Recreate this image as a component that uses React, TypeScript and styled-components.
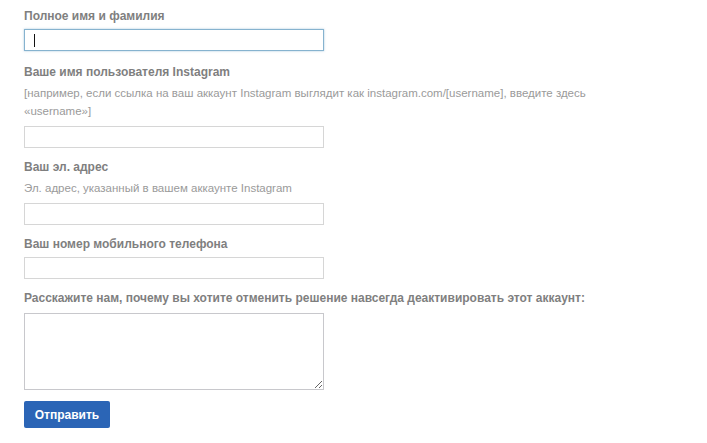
import React from "react";
import styled, { createGlobalStyle } from "styled-components";

const Global = createGlobalStyle`
  html, body { margin: 0; padding: 0; background: #ffffff; }
  body { font-family: "Liberation Sans", Arial, sans-serif; }
`;

const Form = styled.form`
  display: flex;
  flex-direction: column;
  align-items: flex-start;
  padding: 7px 24px 0 24px;
`;

const Field = styled.div<{ $gap?: number }>`
  display: flex;
  flex-direction: column;
  align-items: flex-start;
  margin-bottom: ${(p) => p.$gap ?? 10}px;
`;

const Label = styled.label`
  font-size: 12px;
  font-weight: bold;
  line-height: 18px;
  color: #7f7f7f;
  margin-bottom: 4px;
`;

const Hint = styled.div`
  font-size: 11.5px;
  line-height: 18px;
  color: #9a9a9a;
  margin-top: -1px;
  margin-bottom: 6px;
  max-width: 585px;
`;

const InputWrap = styled.div`
  position: relative;
`;

const TextInput = styled.input<{ $focused?: boolean }>`
  box-sizing: border-box;
  width: 300px;
  height: 22px;
  margin: 0;
  padding: 2px 8px;
  font-family: "Liberation Sans", Arial, sans-serif;
  font-size: 12px;
  background: #fff;
  outline: none;
  border: 1px solid ${(p) => (p.$focused ? "#86b3cf" : "#d6d6d6")};
  box-shadow: ${(p) => (p.$focused ? "0 0 2px rgba(110,160,200,0.6)" : "none")};
`;

const Caret = styled.span`
  position: absolute;
  left: 10px;
  top: 5px;
  width: 1px;
  height: 13px;
  background: #111;
`;

const TextArea = styled.textarea`
  box-sizing: border-box;
  width: 300px;
  height: 77px;
  margin: 2px 0 0 0;
  padding: 4px;
  border: 1px solid #c8c8cc;
  font-family: "Liberation Sans", Arial, sans-serif;
  font-size: 12px;
  outline: none;
  resize: both;
`;

const Submit = styled.button`
  margin-top: 1px;
  width: 86px;
  height: 27px;
  border: none;
  border-radius: 2px;
  background: #2b65b6;
  color: #ffffff;
  font-family: "Liberation Sans", Arial, sans-serif;
  font-weight: bold;
  font-size: 12px;
  padding: 0;
  cursor: pointer;
`;

export default function App() {
  return (
    <>
      <Global />
      <Form onSubmit={(e) => e.preventDefault()}>
        <Field $gap={12}>
          <Label>Полное имя и фамилия</Label>
          <InputWrap>
            <TextInput $focused type="text" />
            <Caret />
          </InputWrap>
        </Field>
        <Field>
          <Label>Ваше имя пользователя Instagram</Label>
          <Hint>
            [например, если ссылка на ваш аккаунт Instagram выглядит как instagram.com/[username], введите здесь
            «username»]
          </Hint>
          <TextInput type="text" />
        </Field>
        <Field>
          <Label>Ваш эл. адрес</Label>
          <Hint>Эл. адрес, указанный в вашем аккаунте Instagram</Hint>
          <TextInput type="text" />
        </Field>
        <Field>
          <Label>Ваш номер мобильного телефона</Label>
          <TextInput type="text" />
        </Field>
        <Field>
          <Label>Расскажите нам, почему вы хотите отменить решение навсегда деактивировать этот аккаунт:</Label>
          <TextArea />
        </Field>
        <Submit type="submit">Отправить</Submit>
      </Form>
    </>
  );
}
